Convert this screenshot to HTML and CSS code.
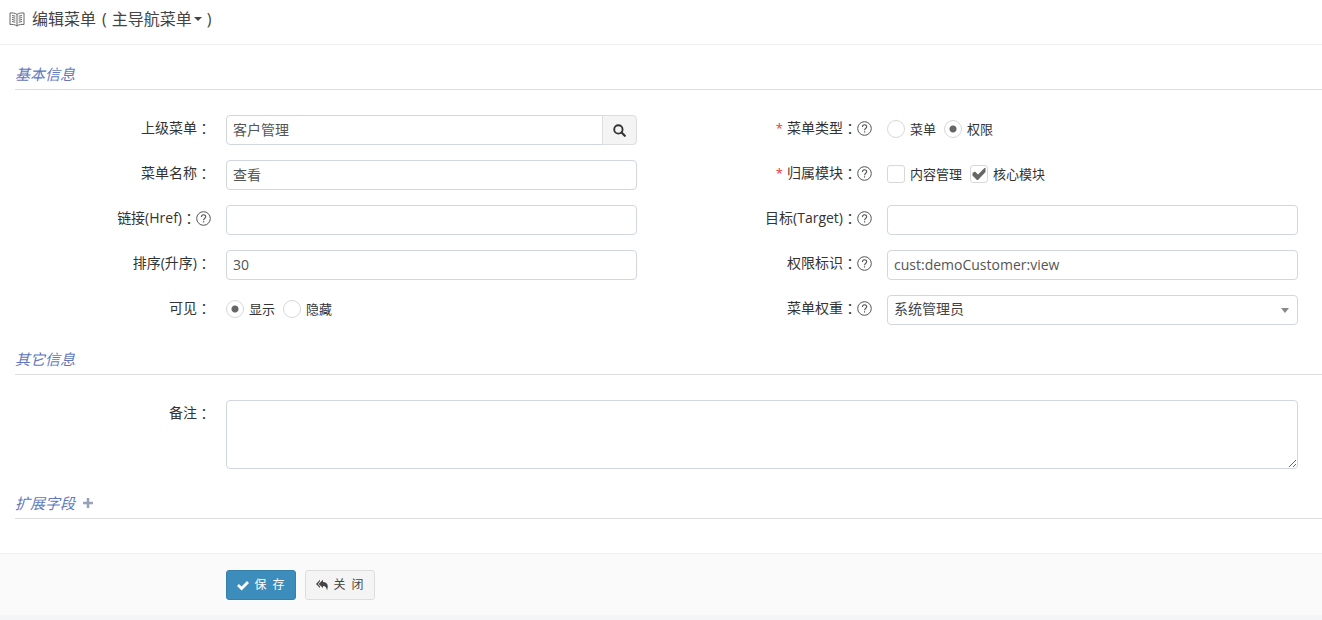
FILE: index.html
```html
<!DOCTYPE html>
<html lang="zh-CN">
<head>
<meta charset="utf-8">
<title>编辑菜单</title>
<link rel="stylesheet" href="styles.css">
</head>
<body>
<svg class="defs" aria-hidden="true">
  <symbol id="help" viewBox="0 0 15 15">
    <circle cx="7.5" cy="7.5" r="6.8" fill="none" stroke="currentColor"/>
    <path d="M5.4 6.1C5.4 3 9.7 3 9.7 5.8C9.7 7.3 7.6 7.3 7.6 9.2M7.6 10.3V11.5" fill="none" stroke="currentColor" stroke-width="1.1"/>
  </symbol>
</svg>
<form class="box">
  <header class="box-header">
    <svg class="book" viewBox="0 0 16 15" aria-hidden="true">
      <path d="M8 2.500C6 1 3.500 .8 1 1V12.500C3.500 12.200 6 12.500 8 14C10 12.500 12.500 12.200 15 12.500V1C12.500 .8 10 1 8 2.500V14M3 3.500L6.300 4.200M3 5.500L6.300 6.200M3 7.500L6.300 8.200M3 9.500L6.300 10.200M13 3.500L9.700 4.200M13 5.500L9.700 6.200M13 7.500L9.700 8.200M13 9.500L9.700 10.200" fill="none" stroke="currentColor"/>
    </svg>
    <h1 class="title">编辑菜单<span class="paren">(</span><button type="button" class="menu-toggle">主导航菜单<span class="caret"></span></button><span class="paren-end">)</span></h1>
  </header>
  <div class="box-body">
    <h2 class="section">基本信息</h2>
    <div class="grid">
      <div class="field">
        <label class="label" for="parent">上级菜单<span class="colon">：</span></label>
        <div class="group">
          <input class="control" id="parent" type="text" value="客户管理">
          <button type="button" class="addon" aria-label="选择">
            <svg class="icon-search" viewBox="0 0 14 14" aria-hidden="true"><circle cx="5.800" cy="5.800" r="4.500" fill="none" stroke="currentColor" stroke-width="2"/><path d="M9.200 9.200L12.700 12.700" stroke="currentColor" stroke-width="2.400" stroke-linecap="round"/></svg>
          </button>
        </div>
      </div>
      <fieldset class="field">
        <legend class="label"><span class="required">*</span>菜单类型<span class="colon">：</span><svg class="help"><use href="#help"/></svg></legend>
        <div class="choices">
          <label class="choice"><input class="radio" type="radio" name="type">菜单</label>
          <label class="choice"><input class="radio" type="radio" name="type" checked>权限</label>
        </div>
      </fieldset>
      <div class="field">
        <label class="label" for="name">菜单名称<span class="colon">：</span></label>
        <input class="control" id="name" type="text" value="查看">
      </div>
      <fieldset class="field">
        <legend class="label"><span class="required">*</span>归属模块<span class="colon">：</span><svg class="help"><use href="#help"/></svg></legend>
        <div class="choices">
          <label class="choice"><input class="check" type="checkbox">内容管理</label>
          <label class="choice"><span class="check-wrap"><input class="check" type="checkbox" checked><svg class="tick" viewBox="0 0 18 18" aria-hidden="true"><path d="M2.500 8L5 6.500L8 9.500L14.500 3H15.500V7L8 15H7L2.500 10.500Z" fill="currentColor"/></svg></span>核心模块</label>
        </div>
      </fieldset>
      <div class="field">
        <label class="label" for="href">链接(Href)<span class="colon">：</span><svg class="help"><use href="#help"/></svg></label>
        <input class="control" id="href" type="text">
      </div>
      <div class="field">
        <label class="label" for="target">目标(Target)<span class="colon">：</span><svg class="help"><use href="#help"/></svg></label>
        <input class="control" id="target" type="text">
      </div>
      <div class="field">
        <label class="label" for="sort">排序(升序)<span class="colon">：</span></label>
        <input class="control" id="sort" type="text" value="30">
      </div>
      <div class="field">
        <label class="label" for="perm">权限标识<span class="colon">：</span><svg class="help"><use href="#help"/></svg></label>
        <input class="control" id="perm" type="text" value="cust:demoCustomer:view">
      </div>
      <fieldset class="field">
        <legend class="label">可见<span class="colon">：</span></legend>
        <div class="choices">
          <label class="choice"><input class="radio" type="radio" name="visible" checked>显示</label>
          <label class="choice"><input class="radio" type="radio" name="visible">隐藏</label>
        </div>
      </fieldset>
      <div class="field">
        <label class="label" for="weight">菜单权重<span class="colon">：</span><svg class="help"><use href="#help"/></svg></label>
        <div class="select-wrap"><select class="control" id="weight"><option>系统管理员</option></select></div>
      </div>
    </div>
    <h2 class="section">其它信息</h2>
    <div class="field field-wide">
      <label class="label" for="remarks">备注<span class="colon">：</span></label>
      <textarea class="control area" id="remarks"></textarea>
    </div>
    <h2 class="section">扩展字段<button type="button" class="expand" aria-label="展开"><svg class="plus" viewBox="0 0 10 10" aria-hidden="true"><path d="M5 0V10M0 5H10" stroke="currentColor" stroke-width="2.600"/></svg></button></h2>
  </div>
  <footer class="box-footer">
    <button type="submit" class="btn btn-primary"><svg class="btn-icon" viewBox="0 0 12 12" aria-hidden="true"><path d="M1 6L4.600 9.500L11 3" fill="none" stroke="currentColor" stroke-width="2.800"/></svg>保&ensp;存</button>
    <button type="button" class="btn"><svg class="btn-icon" viewBox="0 0 12 12" aria-hidden="true"><path d="M4 .8V2.200L1.900 4.900L4 7.500V9L0 4.900ZM7 .8V3C11 3.200 13 5.800 11 11.500C10.800 8.500 9.500 7 7 6.900V9L2.600 4.900Z" fill="currentColor"/></svg>关&ensp;闭</button>
  </footer>
</form>
</body>
</html>
```
FILE: styles.css
```css
* { box-sizing: border-box; }

body {
  margin: 0;
  background: #f4f5f7;
  color: #333;
  font: 14px/20px "Open Sans", "Noto Sans CJK SC", sans-serif;
}

button, input, select, textarea { font: inherit; color: inherit; }

.defs { display: none; }
.box { background: #fff; }

.box-header {
  display: flex;
  align-items: center;
  gap: 7px;
  height: 45px;
  padding: 0 9px 6px;
  border-bottom: 1px solid #eee;
  color: #444;
}
.book { width: 16px; height: 15px; color: #666; }
.title { display: flex; align-items: center; margin: 0; font-size: 16px; font-weight: 400; }
.paren { padding: 0 5px 0 6px; }
.paren-end { padding-left: 5px; }
.menu-toggle {
  display: flex;
  align-items: center;
  gap: 2px;
  padding: 0;
  border: 0;
  background: none;
}
.caret {
  border: 4px solid transparent;
  border-top-color: currentColor;
  border-bottom: 0;
}

.box-body { padding: 10px 0 34px; }

.section {
  display: flex;
  align-items: center;
  gap: 8px;
  height: 35px;
  margin: 0 0 25px 15px;
  padding-top: 3px;
  border-bottom: 1px solid #ddd;
  color: #5f78bd;
  font-size: 15px;
  font-style: italic;
  font-weight: 400;
}
.section:last-child { margin-bottom: 0; }
.expand { display: flex; padding: 0; border: 0; background: none; color: #98a2b8; }
.plus { width: 10px; height: 10px; }

.grid { display: grid; grid-template-columns: 1fr 1fr; row-gap: 15px; margin-bottom: 15px; }

.field {
  display: grid;
  grid-template-columns: 211px minmax(0, 1fr);
  column-gap: 15px;
  min-width: 0;
  margin: 0;
  padding: 0 24px 0 0;
  border: 0;
}
fieldset.field { display: flex; }
.field-wide { margin-bottom: 15px; }

.label {
  display: flex;
  justify-content: flex-end;
  align-items: center;
  height: 26px;
  padding: 0;
}
fieldset .label { float: left; width: 211px; margin-right: 0; }
.colon { font-family: "Noto Sans CJK TC", sans-serif; }
.required { margin-right: 4px; color: #e33; font-size: 13px; }
.help { width: 15px; height: 15px; color: #555; }

.control {
  width: 100%;
  height: 30px;
  padding: 0 6px 2px;
  border: 1px solid #d2d6de;
  border-radius: 4px;
  outline: 0;
  background: #fff;
  color: #555;
}
.group { display: flex; }
.group .control { border-radius: 4px 0 0 4px; }
.addon {
  display: flex;
  flex: 0 0 35px;
  align-items: center;
  justify-content: center;
  margin-left: -1px;
  padding: 0;
  border: 1px solid #ddd;
  border-radius: 0 4px 4px 0;
  background: #f4f4f4;
}
.icon-search { width: 13px; height: 13px; }

.select-wrap { position: relative; }
.select-wrap .control { appearance: none; color: #444; }
.select-wrap::after {
  content: "";
  position: absolute;
  top: 13px;
  right: 9px;
  border: 4px solid transparent;
  border-top: 5px solid #888;
  border-bottom: 0;
  pointer-events: none;
}

.area { display: block; height: 69px; resize: vertical; }

.choices { display: flex; gap: 8px; height: 28px; }
.choice { display: flex; align-items: center; gap: 5px; font-size: 13px; }
.radio, .check {
  appearance: none;
  display: block;
  width: 18px;
  height: 18px;
  margin: 0;
  border: 1px solid #d8d8d8;
  background: #fff;
}
.radio { border-radius: 50%; }
.radio:checked { background: radial-gradient(circle, #666 0 3px, #fff 4px); }
.check { border-radius: 3px; }
.check-wrap { position: relative; }
.tick { position: absolute; inset: 0; color: #666; pointer-events: none; }

.box-footer {
  display: flex;
  gap: 9px;
  padding: 16px 15px 15px 226px;
  border-top: 1px solid #f1f1f1;
  background: #fafafa;
}
.btn {
  display: flex;
  align-items: center;
  justify-content: center;
  gap: 5px;
  width: 70px;
  height: 30px;
  padding: 0;
  border: 1px solid #ddd;
  border-radius: 3px;
  background: #f4f4f4;
  color: #444;
  font-size: 12px;
}
.btn-primary { border-color: #367fa9; background: #3c8dbc; color: #fff; }
.btn-icon { width: 12px; height: 12px; }
```
